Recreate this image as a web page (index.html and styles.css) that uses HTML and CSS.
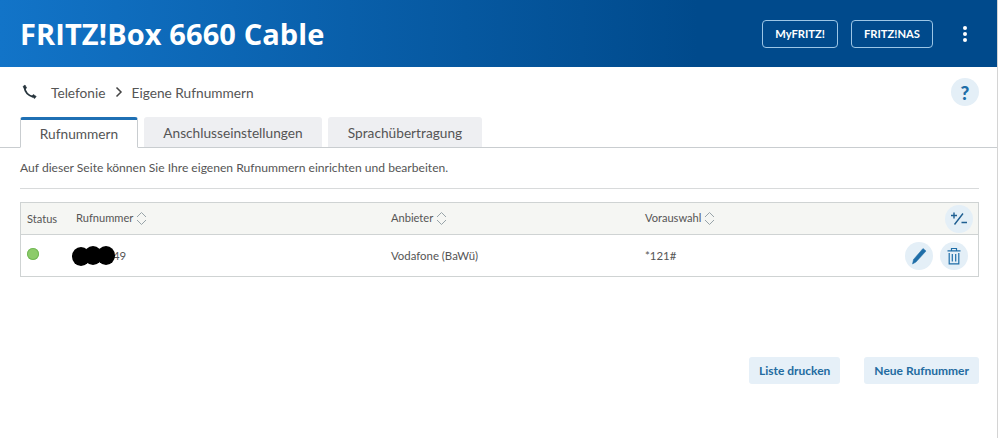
FILE: index.html
```html
<!DOCTYPE html>
<html lang="de">
<head>
    <meta charset="UTF-8">
    <meta name="viewport" content="width=device-width, initial-scale=1.0">
    <title>FRITZ!Box 6660 Cable</title>
    <link rel="stylesheet" href="styles.css">
</head>
<body>
    <header class="top">
        <div class="logo">FRITZ!Box 6660 Cable</div>
        <div class="top-actions">
            <a class="top-button" href="#">MyFRITZ!</a>
            <a class="top-button" href="#">FRITZ!NAS</a>
            <div class="dots"><span></span><span></span><span></span></div>
        </div>
    </header>

    <div class="crumbs">
        <svg class="phone" viewBox="0 0 16 16" width="16" height="16">
            <path d="M3.500 3.500C4 8 7.500 11.500 12 12.800" fill="none" stroke="#26343c" stroke-width="1.800"/>
            <path d="M2 2.600 4 1 5.600 4 3.900 5.400zM10.800 12.300 12.300 10.500 15.200 12.400 13.600 14.600z" fill="#26343c" stroke="#26343c" stroke-width="0.600" stroke-linejoin="round"/>
        </svg>
        <span class="crumb">Telefonie</span>
        <svg class="crumb-arrow" viewBox="0 0 8 12" width="8" height="12">
            <path d="M1.500 1.500 6 6l-4.500 4.500" fill="none" stroke="#444" stroke-width="1.500"/>
        </svg>
        <span class="crumb">Eigene Rufnummern</span>
        <a class="round-button help" href="#">?</a>
    </div>

    <nav class="tabs">
        <a class="tab active" href="#">Rufnummern</a>
        <a class="tab tab-wide" href="#">Anschlusseinstellungen</a>
        <a class="tab tab-last" href="#">Sprachübertragung</a>
    </nav>

    <main class="content">
        <p class="intro">Auf dieser Seite können Sie Ihre eigenen Rufnummern einrichten und bearbeiten.</p>

        <div class="table">
            <div class="row head">
                <div class="col-status">Status</div>
                <div class="col-number">Rufnummer <svg class="sort" viewBox="0 0 11 15" width="11" height="15"><path d="M1 6 5.500 1.500 10 6M1 9l4.500 4.500L10 9" fill="none" stroke="#98a4a9" stroke-width="1"/></svg></div>
                <div class="col-provider">Anbieter <svg class="sort" viewBox="0 0 11 15" width="11" height="15"><path d="M1 6 5.500 1.500 10 6M1 9l4.500 4.500L10 9" fill="none" stroke="#98a4a9" stroke-width="1"/></svg></div>
                <div class="col-prefix">Vorauswahl <svg class="sort" viewBox="0 0 11 15" width="11" height="15"><path d="M1 6 5.500 1.500 10 6M1 9l4.500 4.500L10 9" fill="none" stroke="#98a4a9" stroke-width="1"/></svg></div>
                <div class="col-actions head-actions">
                    <a class="round-button" href="#">
                        <svg viewBox="0 0 16 13" width="16" height="13">
                            <path d="M0 3.500h6M3 .5v6M3.500 12.500 12 1.500M10.500 10.500H16" fill="none" stroke="#1f5f92" stroke-width="1.400"/>
                        </svg>
                    </a>
                </div>
            </div>
            <div class="row body-row">
                <div class="col-status"><span class="led"></span></div>
                <div class="col-number number-cell">
                    <span class="number">49</span>
                    <span class="blob blob-1"></span>
                    <span class="blob blob-2"></span>
                    <span class="blob blob-3"></span>
                </div>
                <div class="col-provider">Vodafone (BaWü)</div>
                <div class="col-prefix">*121#</div>
                <div class="col-actions">
                    <a class="round-button" href="#">
                        <svg viewBox="0 0 16 18" width="16" height="18">
                            <path d="M12 1.500 15 4 5 15 1.500 17 2.500 12.500z" fill="#1f6ea8" stroke="#1f6ea8" stroke-width="0.500" stroke-linejoin="round"/>
                        </svg>
                    </a>
                    <a class="round-button" href="#">
                        <svg viewBox="0 0 14 18" width="14" height="18">
                            <path d="M.5 3.800h13M4.500 3.800V1.500h5v2.300M2.200 6v10.800h9.600V6M5.300 7v7.500M8.700 7v7.500" fill="none" stroke="#1f6ea8" stroke-width="1.200"/>
                        </svg>
                    </a>
                </div>
            </div>
        </div>

        <div class="page-buttons">
            <a class="page-button" href="#">Liste drucken</a>
            <a class="page-button" href="#">Neue Rufnummer</a>
        </div>
    </main>
</body>
</html>
```

FILE: styles.css
```css
body {
    font-family: 'Lato', 'Open Sans', sans-serif;
    margin: 0;
    padding: 0;
    background-color: white;
    color: #555;
    box-sizing: border-box;
    height: 438px;
    border-right: 1px solid #d4d4d4;
    overflow: hidden;
}
a {
    text-decoration: none;
}
.top {
    height: 67px;
    padding: 0 23px 0 20px;
    display: flex;
    justify-content: space-between;
    align-items: center;
    background: linear-gradient(to right, #1274c8, #004a8c 70%);
    color: white;
}
.logo {
    font-family: 'Open Sans', sans-serif;
    font-size: 29px;
    font-weight: 700;
    letter-spacing: 0.1px;
    margin-top: -1px;
}
.top-actions {
    display: flex;
    align-items: center;
}
.top-button {
    box-sizing: border-box;
    height: 28px;
    margin-left: 13px;
    padding: 0 12px;
    display: flex;
    align-items: center;
    border: 1px solid #9cc6e6;
    border-radius: 4px;
    color: white;
    font-size: 11.2px;
    font-weight: 700;
}
.dots {
    width: 4px;
    margin: 0 7px 0 30px;
    display: flex;
    flex-direction: column;
    gap: 2px;
}
.dots span {
    width: 4px;
    height: 4px;
    border-radius: 50%;
    background: white;
}
.crumbs {
    height: 50px;
    padding: 0 18px 0 21px;
    display: flex;
    align-items: center;
    font-size: 13.7px;
    color: #555;
}
.phone {
    margin-right: 14px;
}
.crumb-arrow {
    margin: 0 9px 0 9px;
}
.round-button {
    width: 28px;
    height: 28px;
    border-radius: 50%;
    background: #e4eff7;
    display: flex;
    align-items: center;
    justify-content: center;
    color: #1f6ea8;
}
.help {
    margin-left: auto;
    font-size: 19px;
    font-weight: 900;
}
.tabs {
    box-sizing: border-box;
    height: 31px;
    padding-left: 20px;
    display: flex;
    align-items: flex-end;
    border-bottom: 1px solid #c9cdd0;
}
.tab {
    box-sizing: border-box;
    height: 30px;
    margin-right: 6px;
    display: flex;
    align-items: center;
    justify-content: center;
    background: #eeeff2;
    border-radius: 3px 3px 0 0;
    color: #555;
    font-size: 13.7px;
    width: 178px;
}
.tab.active {
    width: 118px;
    background: white;
    border: 1px solid #c9cdd0;
    border-top: 3px solid #1f70b4;
    border-bottom: 1px solid white;
    height: 31px;
    margin-bottom: -1px;
}
.tab-last {
    width: 154px;
}
.content {
    padding: 0 18px 0 20px;
}
.intro {
    margin: 0;
    height: 40px;
    line-height: 39px;
    font-size: 12.1px;
    border-bottom: 1px solid #d8dadb;
}
.table {
    margin-top: 13px;
    border: 1px solid #cfd3d3;
    font-size: 11.4px;
}
.row {
    display: flex;
    align-items: center;
}
.head {
    height: 31px;
    background: #f5f6f3;
    border-bottom: 1px solid #cfd3d3;
    font-size: 11.1px;
}
.body-row {
    height: 41px;
}
.col-status {
    width: 55px;
    padding-left: 6px;
    box-sizing: border-box;
}
.col-number {
    width: 315px;
}
.col-provider {
    width: 254px;
}
.col-prefix {
    width: 200px;
}
.col-actions {
    flex: 1;
    padding-right: 10px;
    display: flex;
    justify-content: flex-end;
    gap: 7px;
}
.head-actions {
    padding-right: 5px;
}
.sort {
    vertical-align: -4px;
}
.led {
    display: block;
    width: 12px;
    height: 12px;
    border-radius: 50%;
    background: #8ccb6a;
    box-shadow: inset 0 0 0 1px #74b858;
    margin-top: -3px;
}
.number-cell {
    position: relative;
    height: 20px;
    line-height: 20px;
}
.number {
    margin-left: 37px;
}
.blob {
    position: absolute;
    background: black;
    border-radius: 50%;
    width: 18px;
    height: 19px;
    top: 1px;
}
.blob-1 {
    left: -4px;
}
.blob-2 {
    left: 8px;
    top: 0;
}
.blob-3 {
    left: 21px;
    top: 0;
}
.page-buttons {
    margin-top: 80px;
    display: flex;
    justify-content: flex-end;
    gap: 24px;
}
.page-button {
    height: 27px;
    padding: 0 10px;
    display: flex;
    align-items: center;
    background: #e6f0f8;
    border-radius: 3px;
    color: #236ba0;
    font-size: 12px;
    font-weight: 700;
}
```
